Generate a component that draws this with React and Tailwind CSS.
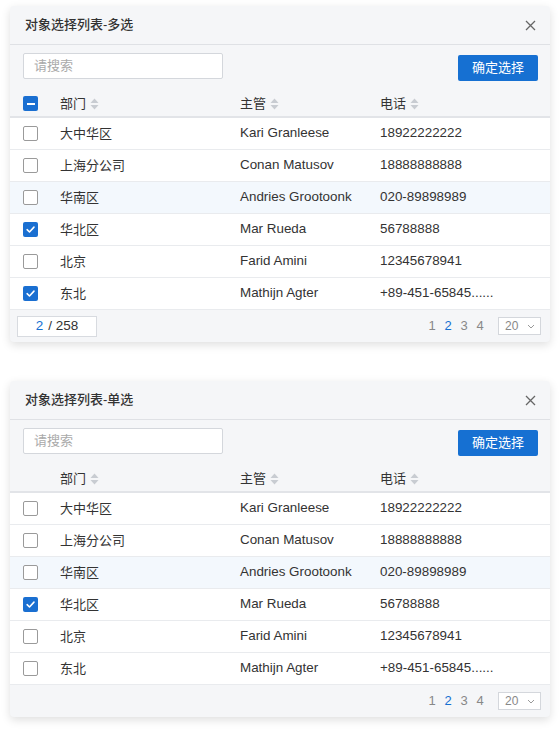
import React from "react";

const rows = [
  { dept: "大中华区", boss: "Kari Granleese", phone: "18922222222" },
  { dept: "上海分公司", boss: "Conan Matusov", phone: "18888888888" },
  { dept: "华南区", boss: "Andries Grootoonk", phone: "020-89898989" },
  { dept: "华北区", boss: "Mar Rueda", phone: "56788888" },
  { dept: "北京", boss: "Farid Amini", phone: "12345678941" },
  { dept: "东北", boss: "Mathijn Agter", phone: "+89-451-65845......" },
];

function Checkbox({ state }) {
  if (state === "checked") {
    return (
      <span className="flex h-[15px] w-[15px] items-center justify-center rounded-[2px] bg-[#1a6fd1]">
        <svg width="11" height="11" viewBox="0 0 12 12" fill="none">
          <path d="M2.3 6.2 4.9 8.7 9.8 3.4" stroke="#fff" strokeWidth="1.7" strokeLinecap="round" strokeLinejoin="round" />
        </svg>
      </span>
    );
  }
  if (state === "half") {
    return (
      <span className="flex h-[15px] w-[15px] items-center justify-center rounded-[2px] bg-[#1a6fd1]">
        <span className="h-[2px] w-[8px] bg-white" />
      </span>
    );
  }
  return <span className="block h-[15px] w-[15px] rounded-[2px] border-[1.5px] border-[#9a9a9a] bg-white" />;
}

function SortIcon() {
  return (
    <svg width="11" height="14" viewBox="0 0 11 14" className="ml-[3px]">
      <path d="M5.5 1.5 9.5 6H1.5Z" fill="#c8ccd2" />
      <path d="M5.5 12.5 1.5 8H9.5Z" fill="#c8ccd2" />
    </svg>
  );
}

function Panel({ title, multi }) {
  const isChecked = (i) => (multi ? i === 3 || i === 5 : i === 3);

  return (
    <div className="mx-[10px] overflow-hidden rounded-[4px] bg-[#f5f6f8] shadow-[0_3px_10px_rgba(0,0,0,0.13)]">
      {/* header */}
      <div className="flex h-[39px] items-center justify-between border-b border-[#dfe1e5] pl-[15px] pr-[14px]">
        <span className="text-[13px] font-medium text-[#333]">{title}</span>
        <svg width="11" height="11" viewBox="0 0 11 11">
          <path d="M1 1 10 10M10 1 1 10" stroke="#666" strokeWidth="1.3" />
        </svg>
      </div>

      {/* toolbar */}
      <div className="flex items-start justify-between pb-[10px] pl-[13px] pr-[12px] pt-[8px]">
        <div className="flex h-[26px] w-[200px] items-center rounded-[2px] border border-[#d4d7dc] bg-white px-[10px] text-[13px] text-[#aaa]">
          请搜索
        </div>
        <button className="mt-[2px] h-[26px] w-[80px] rounded-[2px] bg-[#1670d2] text-[13px] text-white">
          确定选择
        </button>
      </div>

      {/* table head */}
      <div className="grid h-[27px] grid-cols-[37px_180px_140px_1fr] items-center border-b-2 border-[#e2e4e8] pl-[13px] text-[13px] text-[#333]">
        <span>{multi && <Checkbox state="half" />}</span>
        <span className="flex items-center">部门<SortIcon /></span>
        <span className="flex items-center">主管<SortIcon /></span>
        <span className="flex items-center">电话<SortIcon /></span>
      </div>

      {/* rows */}
      {rows.map((r, i) => (
        <div
          key={r.dept}
          className={
            "grid h-[32px] grid-cols-[37px_180px_140px_1fr] items-center border-b border-[#e9ebee] pl-[13px] text-[13px] text-[#333] " +
            (i === 2 ? "bg-[#f3f8fd]" : "bg-white")
          }
        >
          <span>
            <Checkbox state={isChecked(i) ? "checked" : "none"} />
          </span>
          <span>{r.dept}</span>
          <span className="text-[13.4px]">{r.boss}</span>
          <span className="text-[13.4px]">{r.phone}</span>
        </div>
      ))}

      {/* footer */}
      <div className="flex h-[32px] items-center justify-between pl-[7px] pr-[9px]">
        {multi ? (
          <div className="flex h-[21px] w-[80px] items-center justify-center border border-[#d8dbe0] bg-white text-[13.5px] text-[#333]">
            <span className="text-[#1670d2]">2</span>
            <span className="ml-[5px]">/ 258</span>
          </div>
        ) : (
          <span />
        )}
        <div className="flex items-center text-[13px] text-[#888]">
          <span className="w-[16px] text-center">1</span>
          <span className="w-[16px] text-center font-medium text-[#1670d2]">2</span>
          <span className="w-[16px] text-center">3</span>
          <span className="w-[16px] text-center">4</span>
          <div className="ml-[10px] flex h-[18px] w-[43px] items-center justify-between border border-[#d4d7dc] bg-white pl-[6px] pr-[5px] text-[12px] text-[#888]">
            <span>20</span>
            <svg width="8" height="5" viewBox="0 0 8 5">
              <path d="M1 1 4 4 7 1" stroke="#999" strokeWidth="1" fill="none" />
            </svg>
          </div>
        </div>
      </div>
    </div>
  );
}

export default function App() {
  return (
    <div
      className="min-h-[730px] w-[560px] bg-white pt-[6px]"
      style={{ fontFamily: '"Liberation Sans", "Noto Sans CJK SC", sans-serif' }}
    >
      <Panel title="对象选择列表-多选" multi />
      <div className="h-[39px]" />
      <Panel title="对象选择列表-单选" />
    </div>
  );
}
